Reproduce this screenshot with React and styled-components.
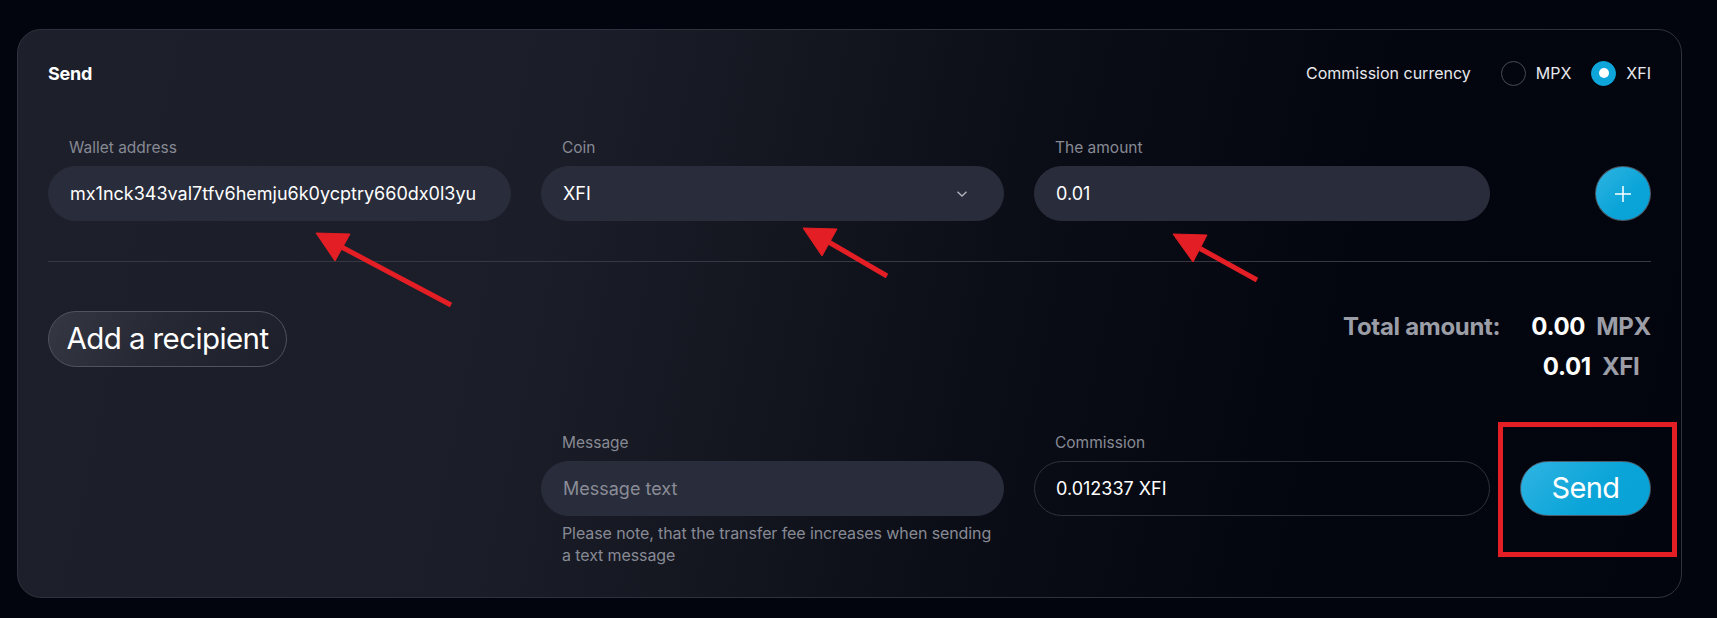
import styled, { createGlobalStyle } from 'styled-components';

const GlobalStyle = createGlobalStyle`
  * { box-sizing: border-box; }
  body {
    margin: 0;
    background: #03050e;
    font-family: Inter, "Liberation Sans", sans-serif;
    color: #ffffff;
  }
`;

const Page = styled.div`
  position: relative;
  width: 1717px;
  height: 618px;
  padding: 29px 35px 0 17px;
`;

const Card = styled.section`
  width: 1665px;
  height: 569px;
  border: 1px solid #2f323d;
  border-radius: 24px;
  padding: 30px 30px 0 30px;
  background: linear-gradient(102deg, #1d1f2a 0%, #1b1d28 32%, #0c0e17 58%, #04060f 78%, #03050e 100%);
`;

const Header = styled.header`
  height: 26px;
  display: flex;
  align-items: center;
  justify-content: space-between;
`;

const Title = styled.h1`
  margin: 0;
  font-size: 18px;
  font-weight: 700;
  letter-spacing: -0.2px;
`;

const CurrencyPicker = styled.div`
  display: flex;
  align-items: center;
  font-size: 16px;
  color: #e8e9ee;
`;

const PickerLabel = styled.span`
  margin-right: 30px;
`;

const RadioOption = styled.label`
  display: flex;
  align-items: center;
  gap: 10px;
  margin-left: ${(p) => (p.first ? '0' : '20px')};
`;

const RadioDot = styled.span`
  width: 25px;
  height: 25px;
  border-radius: 50%;
  border: 1px solid ${(p) => (p.checked ? '#0ea5da' : '#474a55')};
  background: ${(p) => (p.checked ? '#0ea5da' : 'transparent')};
  display: flex;
  align-items: center;
  justify-content: center;

  &::after {
    content: '';
    display: ${(p) => (p.checked ? 'block' : 'none')};
    width: 10px;
    height: 10px;
    border-radius: 50%;
    background: #ffffff;
  }
`;

const FieldGrid = styled.div`
  display: grid;
  grid-template-columns: 463px 463px 1fr 131px;
  column-gap: 30px;
  align-items: ${(p) => p.align || 'end'};
  margin-top: ${(p) => p.top}px;
`;

const Field = styled.div`
  display: flex;
  flex-direction: column;
  gap: 8px;
  grid-column: ${(p) => p.col || 'auto'};
`;

const Label = styled.span`
  font-size: 15.5px;
  line-height: 20px;
  color: #878a94;
  padding-left: 21px;
`;

const InputBox = styled.div`
  height: 55px;
  border-radius: 28px;
  padding: 0 21px;
  display: flex;
  align-items: center;
  justify-content: space-between;
  font-size: 18px;
  color: ${(p) => (p.placeholder ? '#8a8d97' : '#ffffff')};
  background: ${(p) => (p.outlined ? 'transparent' : '#292c3a')};
  border: 1px solid ${(p) => (p.outlined ? '#2e313c' : '#292c3a')};
`;

const Chevron = styled.svg`
  margin-right: 14px;
`;

const RoundButton = styled.button`
  justify-self: end;
  width: 56px;
  height: 55px;
  border-radius: 50%;
  border: 1px solid #4a5a68;
  background: linear-gradient(135deg, #2fb4e2 0%, #0aa4d8 60%, #08a2d6 100%);
  display: flex;
  align-items: center;
  justify-content: center;
  padding: 0;
`;

const SendButton = styled.button`
  margin-top: 28px;
  width: 131px;
  height: 55px;
  border-radius: 28px;
  border: 1px solid #4a5a68;
  background: linear-gradient(135deg, #2fb4e2 0%, #0aa4d8 60%, #08a2d6 100%);
  color: #ffffff;
  font-family: inherit;
  font-size: 29px;
  letter-spacing: -0.6px;
  padding: 0 0 2px 0;
`;

const Divider = styled.hr`
  margin: 40px 0 0 0;
  border: none;
  height: 1px;
  background: #363944;
`;

const SummaryRow = styled.div`
  margin-top: 45px;
  display: flex;
  justify-content: space-between;
  align-items: flex-start;
`;

const AddButton = styled.button`
  margin-top: 4px;
  width: 239px;
  height: 56px;
  border-radius: 28px;
  border: 1px solid #50535e;
  background: linear-gradient(120deg, #353742 0%, #262833 45%, #1d1f2a 100%);
  color: #ffffff;
  font-family: inherit;
  font-size: 29.5px;
  letter-spacing: -0.6px;
  padding: 0 0 3px 0;
`;

const Totals = styled.div`
  display: flex;
  font-size: 24px;
  font-weight: 700;
  line-height: 40px;
  letter-spacing: -0.3px;
`;

const TotalsLabel = styled.span`
  color: #9c9ea7;
  margin-right: 31px;
`;

const TotalsValues = styled.div`
  display: flex;
  flex-direction: column;
  align-items: center;
`;

const Amount = styled.span`
  color: #ffffff;
`;

const Unit = styled.span`
  color: #9c9ea7;
  margin-left: 11px;
`;

const Note = styled.p`
  margin: -2px 0 0 0;
  padding-left: 21px;
  font-size: 16px;
  line-height: 22px;
  color: #878a94;
  letter-spacing: -0.1px;
`;

const Overlay = styled.svg`
  position: absolute;
  left: 0;
  top: 0;
  pointer-events: none;
`;

function Arrow({ head, tail }) {
  const [a, b, c] = head;
  const bx = (b[0] + c[0]) / 2;
  const by = (b[1] + c[1]) / 2;
  return (
    <g fill="#e31e24" stroke="#e31e24">
      <line x1={tail[0]} y1={tail[1]} x2={bx} y2={by} strokeWidth="5" />
      <polygon points={`${a[0]},${a[1]} ${b[0]},${b[1]} ${c[0]},${c[1]}`} strokeWidth="1" />
    </g>
  );
}

export default function App() {
  return (
    <Page>
      <GlobalStyle />
      <Card>
        <Header>
          <Title>Send</Title>
          <CurrencyPicker>
            <PickerLabel>Commission currency</PickerLabel>
            <RadioOption first>
              <RadioDot />
              MPX
            </RadioOption>
            <RadioOption>
              <RadioDot checked />
              XFI
            </RadioOption>
          </CurrencyPicker>
        </Header>

        <FieldGrid top={52}>
          <Field>
            <Label>Wallet address</Label>
            <InputBox>mx1nck343val7tfv6hemju6k0ycptry660dx0l3yu</InputBox>
          </Field>
          <Field>
            <Label>Coin</Label>
            <InputBox>
              XFI
              <Chevron width="12" height="8" viewBox="0 0 12 8" fill="none">
                <path d="M1.5 1.8 L6 6 L10.5 1.8" stroke="#b4b6be" strokeWidth="1.3" />
              </Chevron>
            </InputBox>
          </Field>
          <Field>
            <Label>The amount</Label>
            <InputBox>0.01</InputBox>
          </Field>
          <RoundButton>
            <svg width="18" height="18" viewBox="0 0 18 18">
              <path d="M9 1 V17 M1 9 H17" stroke="#ffffff" strokeWidth="1.5" />
            </svg>
          </RoundButton>
        </FieldGrid>

        <Divider />

        <SummaryRow>
          <AddButton>Add a recipient</AddButton>
          <Totals>
            <TotalsLabel>Total amount:</TotalsLabel>
            <TotalsValues>
              <span>
                <Amount>0.00</Amount>
                <Unit>MPX</Unit>
              </span>
              <span>
                <Amount>0.01</Amount>
                <Unit>XFI</Unit>
              </span>
            </TotalsValues>
          </Totals>
        </SummaryRow>

        <FieldGrid top={46} align="start">
          <Field col="2">
            <Label>Message</Label>
            <InputBox placeholder="true">Message text</InputBox>
            <Note>
              Please note, that the transfer fee increases when sending
              <br />
              a text message
            </Note>
          </Field>
          <Field col="3">
            <Label>Commission</Label>
            <InputBox outlined>0.012337 XFI</InputBox>
          </Field>
          <SendButton>Send</SendButton>
        </FieldGrid>
      </Card>

      <Overlay width="1717" height="618" viewBox="0 0 1717 618">
        <Arrow head={[[316, 233], [350, 234], [335, 261]]} tail={[451, 305]} />
        <Arrow head={[[803, 228], [837, 229], [822, 256]]} tail={[887, 276]} />
        <Arrow head={[[1173, 234], [1207, 235], [1193, 262]]} tail={[1257, 280]} />
        <rect x="1500.5" y="424.5" width="174" height="130" fill="none" stroke="#e31e24" strokeWidth="5" />
      </Overlay>
    </Page>
  );
}
